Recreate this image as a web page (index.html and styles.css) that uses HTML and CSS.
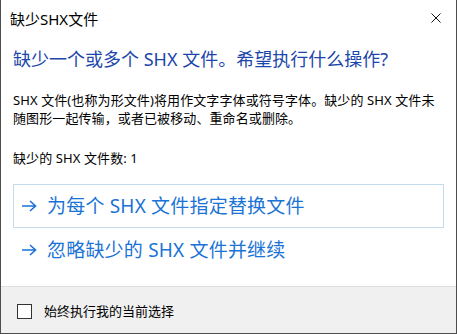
FILE: index.html
```html
<!DOCTYPE html>
<html lang="zh-CN">
<head>
<meta charset="utf-8">
<title>缺少SHX文件</title>
<link rel="stylesheet" href="styles.css">
</head>
<body>
<div class="window">
  <div class="titlebar">
    <span class="title">缺少SHX文件</span>
    <svg class="close" width="10" height="10" viewBox="0 0 10 10"><path d="M0.5 0.5 L9.5 9.5 M9.5 0.5 L0.5 9.5" stroke="#111" stroke-width="1" fill="none"/></svg>
  </div>
  <div class="content">
    <h1 class="instruction">缺少一个或多个 SHX 文件。希望执行什么操作?</h1>
    <p class="desc">SHX 文件(也称为形文件)将用作文字字体或符号字体。缺少的 SHX 文件未<br>随图形一起传输，或者已被移动、重命名或删除。</p>
    <p class="count">缺少的 SHX 文件数: 1</p>
    <div class="links">
      <div class="cmd cmd-focused">
        <svg class="arrow" width="16" height="12" viewBox="0 0 16 12"><path d="M1 6 H14.5 M9 1 L14.5 6 L9 11" stroke="#1a73d6" stroke-width="1.6" fill="none"/></svg>
        <span>为每个 SHX 文件指定替换文件</span>
      </div>
      <div class="cmd">
        <svg class="arrow" width="16" height="12" viewBox="0 0 16 12"><path d="M1 6 H14.5 M9 1 L14.5 6 L9 11" stroke="#1a73d6" stroke-width="1.6" fill="none"/></svg>
        <span>忽略缺少的 SHX 文件并继续</span>
      </div>
    </div>
  </div>
  <div class="footer">
    <span class="checkbox"></span>
    <span class="check-label">始终执行我的当前选择</span>
  </div>
</div>
</body>
</html>
```
FILE: styles.css
```css
html, body {
  margin: 0;
  padding: 0;
  background: #fff;
}
.window {
  width: 457px;
  height: 334px;
  box-sizing: border-box;
  border: 1px solid #4d4d4d;
  border-top: 0;
  display: flex;
  flex-direction: column;
  background: #fff;
  font-family: "Noto Sans", "Noto Sans CJK SC", sans-serif;
  color: #000;
}
.titlebar {
  height: 38px;
  display: flex;
  align-items: center;
  justify-content: space-between;
  padding: 0 15px 0 9px;
  flex-shrink: 0;
}
.title {
  font-size: 15px;
  line-height: 20px;
}
.close {
  display: block;
  margin-top: -2px;
}
.content {
  padding: 9px 12px 0 12px;
  display: flex;
  flex-direction: column;
}
.instruction {
  margin: 0;
  font-size: 18px;
  font-weight: normal;
  line-height: 24px;
  color: #1c46ab;
}
.desc {
  margin: 20px 0 0 0;
  font-size: 13px;
  line-height: 18px;
  letter-spacing: 0.1px;
  white-space: nowrap;
}
.count {
  margin: 22px 0 0 0;
  font-size: 13px;
  line-height: 18px;
  letter-spacing: 0.1px;
}
.links {
  margin-top: 17px;
  display: flex;
  flex-direction: column;
}
.cmd {
  height: 44px;
  box-sizing: border-box;
  border: 1px solid transparent;
  display: flex;
  align-items: center;
  gap: 10px;
  padding-left: 7px;
  color: #1a73d6;
  font-size: 19px;
  line-height: 24px;
  letter-spacing: 0.2px;
}
.cmd-focused {
  border-color: #c5dcef;
}
.arrow {
  display: block;
  flex-shrink: 0;
}
.footer {
  margin-top: auto;
  height: 47px;
  box-sizing: border-box;
  border-top: 1px solid #dedede;
  background: #f0f0f0;
  display: flex;
  align-items: center;
  padding-left: 16px;
  gap: 12px;
}
.checkbox {
  width: 15px;
  height: 15px;
  box-sizing: border-box;
  border: 1px solid #333;
  background: #fff;
  margin-top: 2px;
}
.check-label {
  font-size: 13px;
  line-height: 18px;
  margin-top: 2px;
}
```
